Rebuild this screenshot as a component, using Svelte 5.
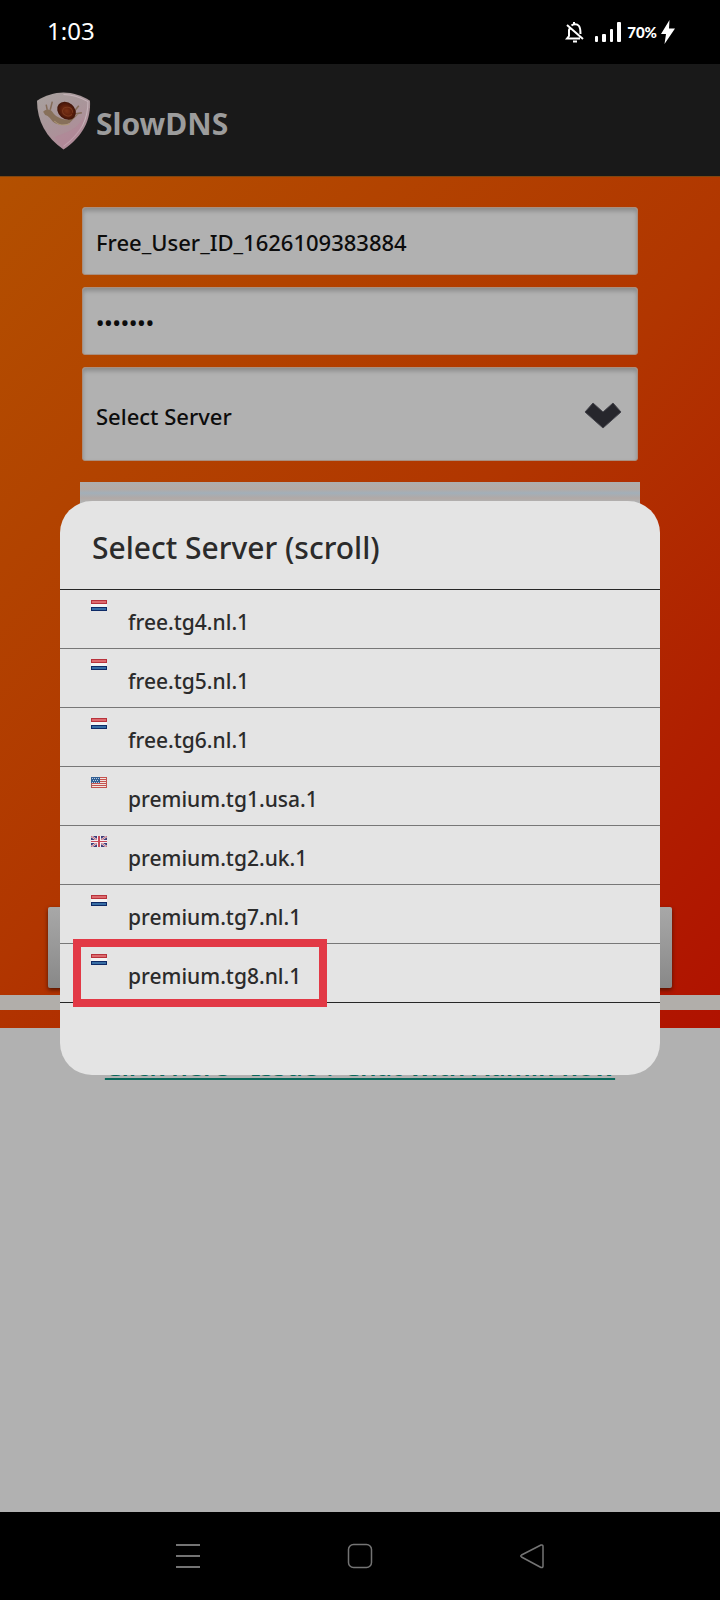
<script>
  const servers = [
    { name: 'free.tg4.nl.1', flag: 'nl' },
    { name: 'free.tg5.nl.1', flag: 'nl' },
    { name: 'free.tg6.nl.1', flag: 'nl' },
    { name: 'premium.tg1.usa.1', flag: 'us' },
    { name: 'premium.tg2.uk.1', flag: 'uk' },
    { name: 'premium.tg7.nl.1', flag: 'nl' },
    { name: 'premium.tg8.nl.1', flag: 'nl', marked: true }
  ];
</script>

<div class="screen">
  <header class="status">
    <time>1:03</time>
    <div class="indicators">
      <svg width="20" height="22" viewBox="0 0 20 22" fill="none" stroke="#fff" stroke-width="2">
        <path d="M5 7 4 9v6l-2 2.500h13M6.500 4.500C8 3 12 2.500 14 5c1 1.500 1.500 3 1.500 8M2 4l16 14" />
        <path d="M9 1v2M8 20.500h4" />
      </svg>
      <svg class="signal" width="26" height="20" viewBox="0 0 26 20" fill="#fff">
        <rect x="0" y="14" width="3" height="6" rx="1" />
        <rect x="7" y="12" width="4" height="8" rx="1" />
        <rect x="15" y="7" width="3" height="13" rx="1" />
        <rect x="22" y="0" width="4" height="20" rx="1" />
      </svg>
      <span class="battery">70%</span>
      <svg width="14" height="24" viewBox="0 0 14 24" fill="#fff">
        <path d="M8.500 0 0 14h5L3.500 24 14 8.500H8z" />
      </svg>
    </div>
  </header>

  <div class="appbar">
    <svg width="55" height="60" viewBox="0 0 54 58">
      <defs>
        <linearGradient id="shield" x1="0" y1="0" x2="0.600" y2="1">
          <stop offset="0" stop-color="#a9a29f" />
          <stop offset="0.450" stop-color="#a8979a" />
          <stop offset="1" stop-color="#b08a98" />
        </linearGradient>
        <radialGradient id="shell">
          <stop offset="0" stop-color="#7a3216" />
          <stop offset="0.600" stop-color="#5e200d" />
          <stop offset="1" stop-color="#3f1408" />
        </radialGradient>
      </defs>
      <path d="M27 1C36 1 45 4 53 9c1 18-6 34-26 48C10 45 1 29 1 9 9 4 18 1 27 1z" fill="url(#shield)" />
      <path d="M27 3c9 0 17 3 24 7 0 17-6 30-24 44" fill="none" stroke="#c6b4ba" stroke-width="1" />
      <path d="M30 40c8-3 13-8 17-15-1 14-8 22-20 30l-9-10z" fill="#b58196" opacity="0.400" />
      <path d="M7 20c3-3 7-3 9 0 3 5 8 7 15 8l11-6-9 9c-6 3-12 2-16-1-3-3-4-6-8-7z" fill="#87705a" />
      <path d="M11 18 10 13M14 18l2-8M38 19l4-5M39 22l6-1" stroke="#846c59" stroke-width="1.500" fill="none" />
      <path d="M18 29c4 4 9 5 15 3" stroke="#b09a78" fill="none" />
      <ellipse cx="30" cy="19" rx="10" ry="8" transform="rotate(40 30 19)" fill="url(#shell)" />
      <path d="M35 22c-1 4-9 2-9-3 1-5 10-5 10 2" stroke="#7a3a1e" fill="none" />
    </svg>
    <h1>SlowDNS</h1>
  </div>

  <main>
    <form class="panel">
      <input class="field" type="text" aria-label="User name" value="Free_User_ID_1626109383884" />
      <input class="field" type="password" aria-label="Password" value="slowdns" />
      <div class="picker">
        <select class="field" aria-label="Server">
          <option>Select Server</option>
        </select>
        <svg width="38" height="28" viewBox="0 0 38 28">
          <path d="M9 2 1 11l18 16 18-16-8-9-10 9z" fill="#26262c" stroke="#44444b" stroke-width="1" />
        </svg>
      </div>
      <div class="payload"></div>
      <button class="connect" type="button" aria-label="Connect"></button>
    </form>
    <div class="stripe"></div>
    <div class="band"></div>
    <p class="help"><a href="#chat">Click here - Issue ? Chat with Admin now</a></p>
  </main>

  <nav>
    <button aria-label="Recent apps">
      <svg width="26" height="26" viewBox="0 0 26 26" fill="none" stroke="#747474" stroke-width="2">
        <path d="M1 2h24M1 13h24M1 24h24" />
      </svg>
    </button>
    <button aria-label="Home">
      <svg width="26" height="26" viewBox="0 0 26 26" fill="none" stroke="#747474" stroke-width="1.500">
        <rect x="1.500" y="1.500" width="23" height="23" rx="5" />
      </svg>
    </button>
    <button aria-label="Back">
      <svg width="26" height="26" viewBox="0 0 26 26" fill="none" stroke="#747474" stroke-width="1.500" stroke-linejoin="round">
        <path d="M22 2 2.500 12Q1 13 2.500 14L22 24.500q2 .500 2-1.500V3.500Q24 1.500 22 2z" />
      </svg>
    </button>
  </nav>

  <section class="dialog" role="dialog" aria-labelledby="dialog-title">
    <h2 id="dialog-title">Select Server (scroll)</h2>
    <ul>
      {#each servers as server}
        <li class:marked={server.marked}>
          <button>
            <svg width="16" height="11" viewBox="0 0 16 11">
              {#if server.flag === 'nl'}
                <path fill="#f4f4f4" d="M0 0h16v11H0z" />
                <path fill="#b8323b" d="M0 0h16v4H0z" />
                <path fill="#dc6a6e" d="M1 1h14v2H1z" />
                <path fill="#0e2a66" d="M0 7h16v4H0z" />
                <path fill="#376da4" d="M1 8h14v2H1z" />
              {:else if server.flag === 'us'}
                <path fill="#efe3e0" d="M0 0h16v11H0z" />
                <path stroke="#c4524e" d="M0 .500h16M0 2.500h16M0 4.500h16M0 6.500h16M0 8.500h16M0 10.500h16M15.500 0v11" />
                <path fill="#315f93" d="M0 0h9v6H0z" />
                <path stroke="#b8cbe0" stroke-dasharray="1 1" d="M1 1.500h7M2 3.500h6M1 5.500h7" />
                <path stroke="#a35b5b" d="M.500 6v5" />
              {:else}
                <path fill="#3e3c78" d="M0 0h16v11H0z" />
                <path stroke="#eeeaf0" stroke-width="2" d="m0 0 16 11M16 0 0 11" />
                <path stroke="#c8606c" d="m0 0 16 11M16 0 0 11" />
                <path stroke="#f3eef2" stroke-width="4" d="M8 0v11" />
                <path stroke="#f3eef2" stroke-width="3" d="M0 5.500h16" />
                <path stroke="#c94a58" stroke-width="2" d="M8 0v11" />
                <path stroke="#c94a58" d="M0 5.500h16" />
              {/if}
            </svg>
            <span>{server.name}</span>
          </button>
        </li>
      {/each}
    </ul>
  </section>
</div>

<style>
  :global(body) {
    margin: 0;
    background: #000;
  }

  .screen,
  .screen * {
    box-sizing: border-box;
  }

  .screen {
    position: relative;
    display: flex;
    flex-direction: column;
    min-height: 100vh;
    font-family: 'Noto Sans', 'Open Sans', sans-serif;
    font-size: 22px;
    background: #b1b1b1;
  }

  button,
  input,
  select {
    font: inherit;
    color: inherit;
    border: 0;
    margin: 0;
  }

  svg {
    display: block;
    flex: none;
  }

  .status {
    display: flex;
    justify-content: space-between;
    align-items: center;
    height: 64px;
    padding: 0 45px 0 47px;
    background: #000;
    color: #fff;
  }

  .status time {
    font-size: 24px;
    line-height: 32px;
    padding-bottom: 2px;
  }

  .indicators {
    display: flex;
    align-items: center;
    gap: 4px;
  }

  .signal {
    margin-left: 6px;
  }

  .battery {
    margin-left: 2px;
    font-family: Lato, sans-serif;
    font-size: 15px;
    font-weight: 900;
  }

  .appbar {
    display: flex;
    align-items: center;
    gap: 5px;
    height: 112px;
    padding: 2px 36px 0;
    background: #191919;
    color: #9c9c9c;
  }

  h1 {
    margin: 6px 0 0;
    font-size: 30px;
    font-weight: 700;
    line-height: 40px;
  }

  main {
    flex: 1;
    background: linear-gradient(135deg, #b35000 0, #b13600 50%, #b01f00 80%, #b01200 100%) 0 0 / 100% 852px no-repeat;
  }

  .panel {
    display: flex;
    flex-direction: column;
    gap: 12px;
    padding: 30px 82px 7px;
    border-top: 1px solid #80460f;
  }

  .field {
    width: 100%;
    height: 68px;
    padding: 2px 13px 0;
    border: 1px solid #a98f80;
    border-radius: 3px;
    background: #b1b1b1;
    box-shadow: inset 0 3px 4px #8c8c8c;
    color: #0c0c0c;
    font-weight: 500;
    appearance: none;
    outline: none;
  }

  .picker {
    display: grid;
    align-items: center;
  }

  .picker > * {
    grid-area: 1 / 1;
  }

  .picker .field {
    height: 94px;
    padding-top: 4px;
  }

  .picker svg {
    justify-self: end;
    margin: 2px 16px 0 0;
    pointer-events: none;
  }

  .payload {
    height: 425px;
    margin: 9px -2px 0;
    background: linear-gradient(#aeaeae 0, #b3aaa5 7px, #a2afb9 11px, #b1a9a6 16px, #b1b1b1 20px);
  }

  .connect {
    height: 81px;
    margin: -12px -34px 0;
    border-radius: 2px;
    background: linear-gradient(#a8a8a8, #888);
    box-shadow: 0 2px 4px #501400;
  }

  .stripe {
    height: 15px;
    background: #b1aeaa;
  }

  .band {
    height: 18px;
  }

  .help {
    margin: 0;
    padding-top: 22px;
    text-align: center;
    font-size: 26px;
    font-weight: 600;
    line-height: 32px;
  }

  .help a {
    color: #08675a;
  }

  nav {
    display: flex;
    justify-content: center;
    gap: 122px;
    height: 88px;
    background: #000;
  }

  nav button {
    display: grid;
    place-items: center;
    width: 50px;
    padding: 0;
    background: none;
  }

  .dialog {
    position: absolute;
    top: 501px;
    left: 60px;
    right: 60px;
    padding-bottom: 72px;
    border-radius: 32px;
    background: #e4e4e4;
    color: #2b2b2b;
  }

  h2 {
    margin: 0;
    padding: 27px 32px 21px;
    border-bottom: 1px solid #262626;
    font-size: 30px;
    font-weight: 500;
    line-height: 40px;
  }

  ul {
    margin: 0;
    padding: 0;
    list-style: none;
  }

  li {
    position: relative;
    border-bottom: 1px solid #777;
  }

  li:last-child {
    border-color: #262626;
  }

  li button {
    display: flex;
    align-items: flex-start;
    gap: 21px;
    width: 100%;
    padding: 10px 31px 11px;
    background: none;
    font-size: 21px;
    font-weight: 500;
    text-align: left;
  }

  li span {
    padding-top: 7px;
    line-height: 30px;
  }

  .marked::after {
    content: '';
    position: absolute;
    top: -5px;
    bottom: -5px;
    left: 13px;
    width: 238px;
    border: 8px solid #e23946;
    pointer-events: none;
  }
</style>
